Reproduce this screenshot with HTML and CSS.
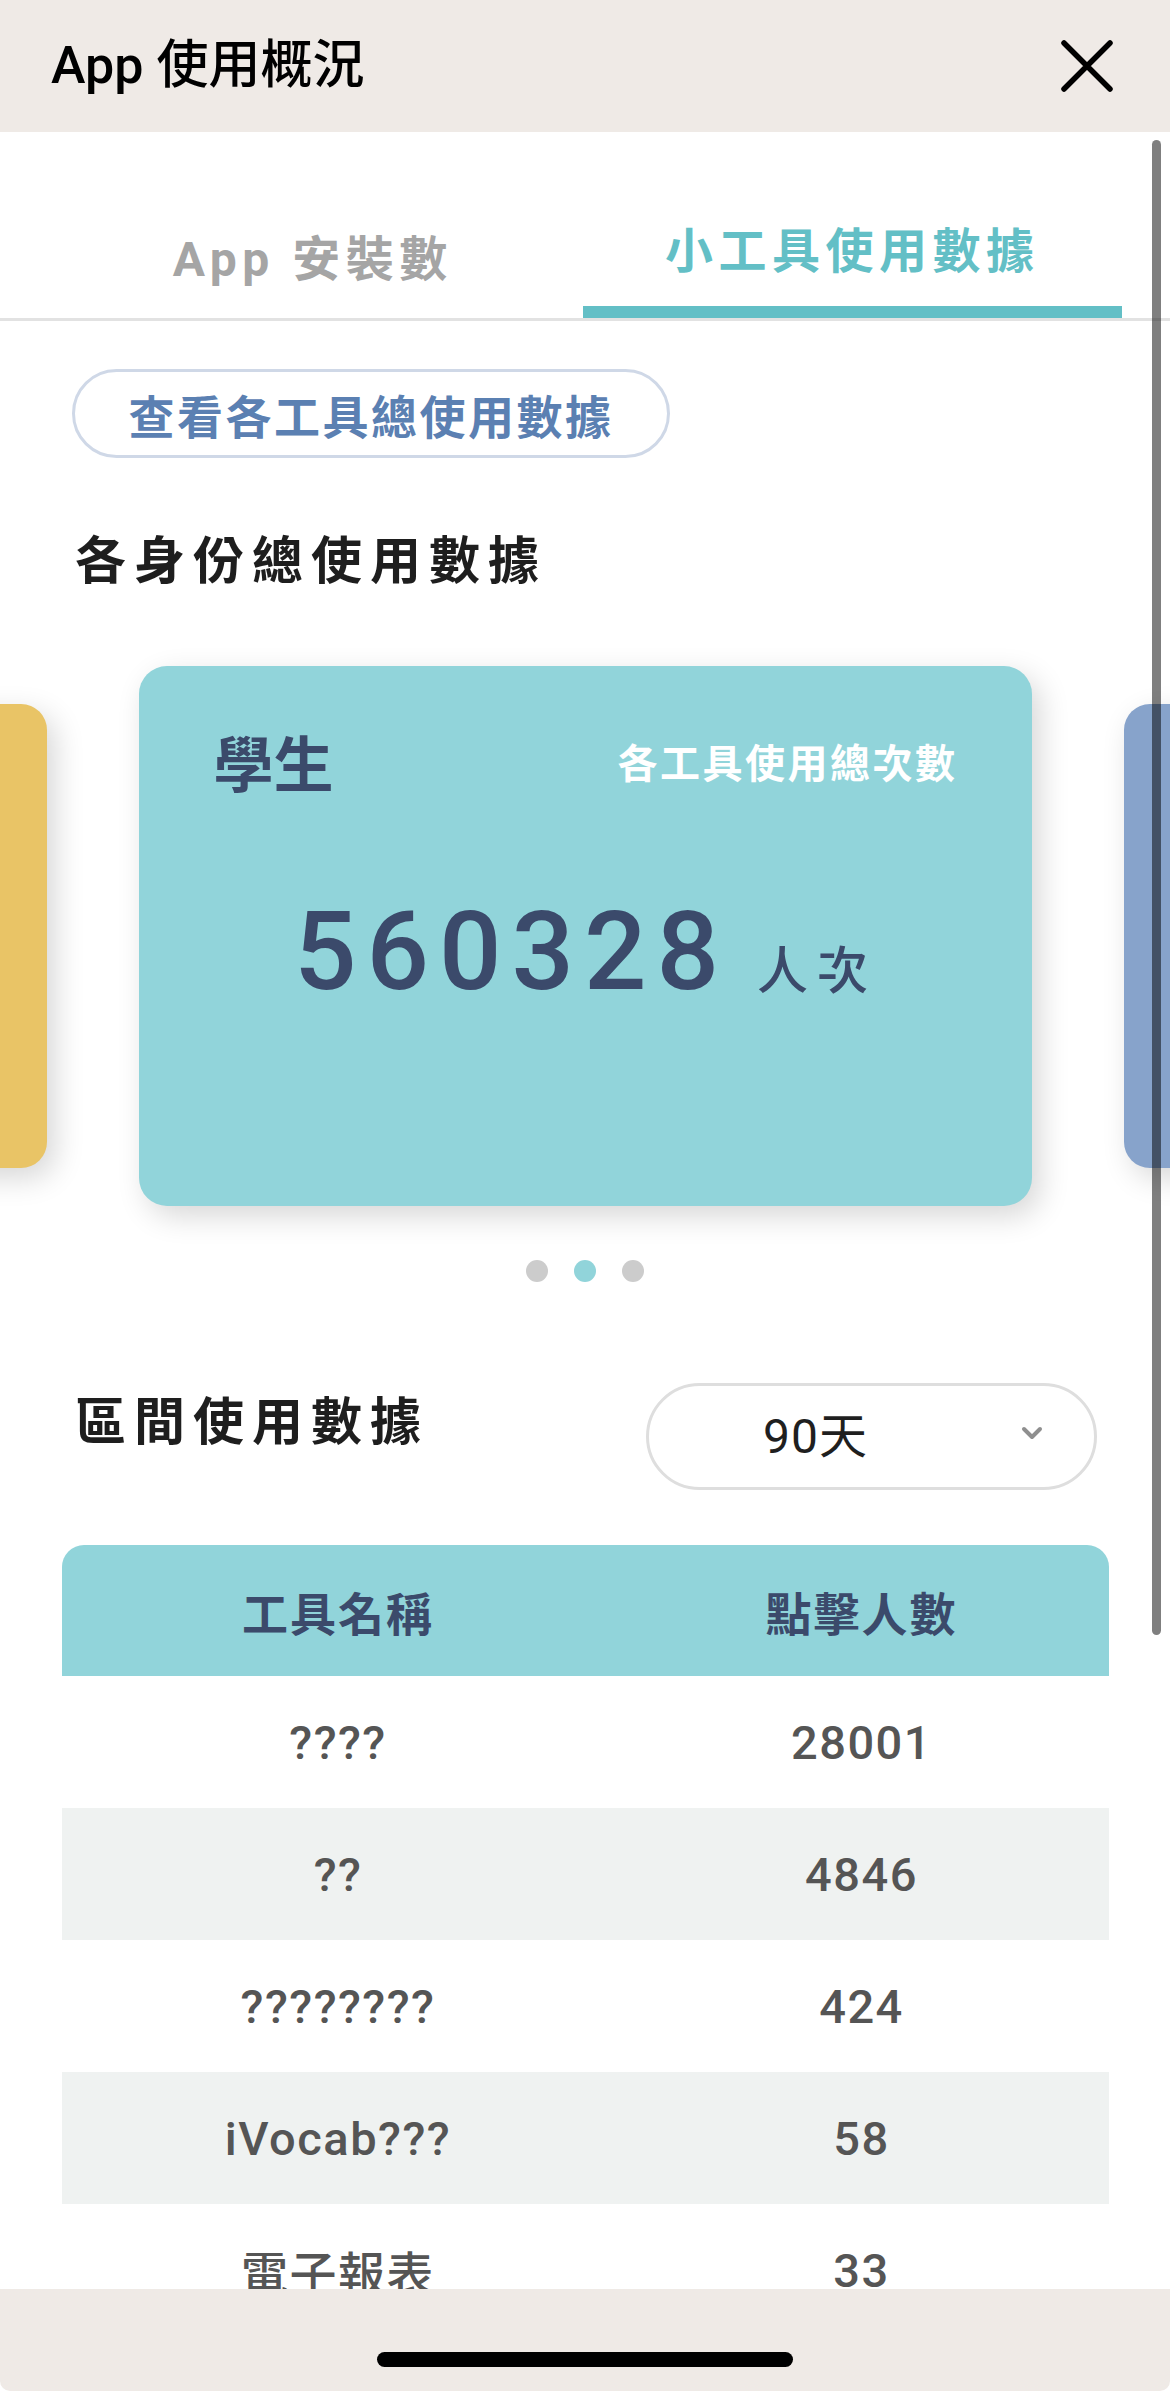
FILE: index.html
```html
<!DOCTYPE html>
<html lang="zh-Hant">
<head>
<meta charset="utf-8">
<title>App 使用概況</title>
<link rel="stylesheet" href="styles.css">
</head>
<body>
<header class="topbar">
  <h1 class="topbar-title">App 使用概況</h1>
  <button class="close-btn" aria-label="關閉">
    <svg width="52" height="52" viewBox="0 0 52 52"><path d="M3 3 L49 49 M49 3 L3 49" stroke="#000" stroke-width="5.5" stroke-linecap="round" fill="none"/></svg>
  </button>
</header>

<main class="content">
  <nav class="tabs">
    <div class="tab"><span class="tab-label">App 安裝數</span></div>
    <div class="tab tab-active"><span class="tab-label">小工具使用數據</span><span class="tab-bar"></span></div>
  </nav>

  <button class="pill-btn">查看各工具總使用數據</button>

  <h2 class="section-title first">各身份總使用數據</h2>

  <div class="carousel">
    <div class="card card-side card-yellow"></div>
    <div class="card card-main">
      <div class="card-top">
        <span class="card-role">學生</span>
        <span class="card-caption">各工具使用總次數</span>
      </div>
      <div class="card-value">
        <span class="card-number">560328</span>
        <span class="card-unit">人次</span>
      </div>
    </div>
    <div class="card card-side card-blue"></div>
  </div>

  <div class="dots">
    <span class="dot"></span>
    <span class="dot dot-active"></span>
    <span class="dot"></span>
  </div>

  <div class="range-row">
    <h2 class="section-title">區間使用數據</h2>
    <div class="select">
      <span class="select-value">90天</span>
      <svg class="chevron" width="22" height="15" viewBox="0 0 22 15"><path d="M3 3 L11 11 L19 3" stroke="#8f8f8f" stroke-width="4" stroke-linecap="round" stroke-linejoin="round" fill="none"/></svg>
    </div>
  </div>

  <div class="table">
    <div class="table-row table-head">
      <span>工具名稱</span><span>點擊人數</span>
    </div>
    <div class="table-row"><span>????</span><span>28001</span></div>
    <div class="table-row alt"><span>??</span><span>4846</span></div>
    <div class="table-row"><span>????????</span><span>424</span></div>
    <div class="table-row alt"><span>iVocab???</span><span>58</span></div>
    <div class="table-row"><span>電子報表</span><span>33</span></div>
  </div>

  <div class="scrollbar"></div>
</main>

<footer class="bottombar">
  <span class="home-indicator"></span>
</footer>
</body>
</html>
```
FILE: styles.css
```css
* { box-sizing: border-box; margin: 0; padding: 0; }

html, body {
  width: 1170px;
  height: 2391px;
  background: #fff;
}

body {
  font-family: "Noto Sans CJK TC", "Roboto", sans-serif;
  display: flex;
  flex-direction: column;
  overflow: hidden;
}

/* Top bar */
.topbar {
  flex: none;
  height: 132px;
  background: #efeae6;
  display: flex;
  align-items: center;
  justify-content: space-between;
  padding: 0 57px 0 51px;
}

.topbar-title {
  font-family: "Roboto", "Noto Sans CJK TC", sans-serif;
  font-size: 52px;
  font-weight: 500;
  color: #000;
  line-height: 60px;
}

.close-btn {
  border: 0;
  background: none;
  width: 52px;
  height: 52px;
  display: block;
}
.close-btn svg { display: block; }

/* Content */
.content {
  flex: 1;
  min-height: 0;
  position: relative;
  overflow: hidden;
  display: flex;
  flex-direction: column;
}

.content > * { flex-shrink: 0; }

/* Tabs */
.tabs {
  display: flex;
  padding: 0 48px 0 43px;
  border-bottom: 3px solid #e2e2e2;
}

.tab {
  flex: 1;
  height: 186px;
  display: flex;
  flex-direction: column;
  justify-content: flex-end;
  align-items: stretch;
  text-align: center;
}

.tab-label {
  font-family: "Roboto", "Noto Sans CJK TC", sans-serif;
  font-size: 48px;
  font-weight: 700;
  letter-spacing: 5.5px;
  line-height: 60px;
  color: #a5a5a5;
  margin-bottom: 28px;
}

.tab-active .tab-label {
  color: #63bfc6;
  margin-bottom: 24px;
}

.tab-bar {
  display: block;
  height: 12px;
  background: #63bfc6;
}

/* Pill button */
.pill-btn {
  align-self: flex-start;
  margin: 48px 0 0 72px;
  width: 598px;
  height: 89px;
  border: 3px solid #cfd8e7;
  border-radius: 45px;
  background: #fff;
  font-family: "Noto Sans CJK TC", sans-serif;
  font-size: 46px;
  font-weight: 700;
  letter-spacing: 2.5px;
  color: #5b80b2;
  line-height: 1;
  display: flex;
  align-items: center;
  justify-content: center;
}

/* Section titles */
.section-title {
  font-family: "Noto Sans CJK TC", sans-serif;
  font-size: 51px;
  font-weight: 700;
  letter-spacing: 8px;
  line-height: 60px;
  color: #1e1e1e;
}

.section-title.first {
  margin: 69px 0 0 75px;
}

/* Carousel */
.carousel {
  display: flex;
  justify-content: center;
  align-items: center;
  gap: 92px;
  overflow: hidden;
  padding: 79px 0 40px;
}

.card {
  flex: none;
  border-radius: 28px;
  box-shadow: 8px 10px 30px rgba(0, 0, 0, 0.16);
}

.card-side {
  width: 768px;
  height: 464px;
  border-radius: 26px;
}

.card-yellow { background: #e9c466; }
.card-blue { background: #87a3cb; }

.card-main {
  width: 893px;
  height: 540px;
  background: #91d4da;
  padding: 60px 74px 0 75px;
  display: flex;
  flex-direction: column;
}

.card-top {
  display: flex;
  justify-content: space-between;
  align-items: center;
}

.card-role {
  font-size: 60px;
  font-weight: 700;
  line-height: 70px;
  color: #3b4a6b;
}

.card-caption {
  font-size: 40px;
  font-weight: 700;
  letter-spacing: 2.5px;
  line-height: 50px;
  color: #fff;
}

.card-value {
  margin-top: 101px;
  display: flex;
  justify-content: center;
  align-items: baseline;
}

.card-number {
  font-family: "Roboto", "Noto Sans CJK TC", sans-serif;
  font-size: 110px;
  font-weight: 500;
  letter-spacing: 10px;
  line-height: 110px;
  color: #3b4a6b;
}

.card-unit {
  margin-left: 28px;
  font-size: 51px;
  font-weight: 500;
  letter-spacing: 9px;
  color: #3b4a6b;
}

/* Dots */
.dots {
  display: flex;
  justify-content: center;
  gap: 26px;
  margin-top: 14px;
}

.dot {
  width: 22px;
  height: 22px;
  border-radius: 50%;
  background: #cccccc;
}

.dot-active { background: #91d4da; }

/* Range row */
.range-row {
  display: flex;
  justify-content: space-between;
  align-items: flex-start;
  margin-top: 101px;
  padding: 0 73px 0 75px;
}

.range-row .section-title {
  margin-top: 5px;
}

.select {
  flex: none;
  width: 451px;
  height: 107px;
  border: 3px solid #dedede;
  border-radius: 54px;
  display: flex;
  align-items: center;
  justify-content: space-between;
  padding: 0 51px 0 114px;
}

.select-value {
  font-family: "Roboto", "Noto Sans CJK TC", sans-serif;
  font-size: 48px;
  font-weight: 400;
  letter-spacing: 1px;
  color: #1f1f1f;
  line-height: 60px;
}

.chevron { display: block; margin-top: -6px; }

/* Table */
.table {
  margin: 55px 61px 0 62px;
}

.table-row {
  display: grid;
  grid-template-columns: 552px 1fr;
  height: 132px;
  align-items: center;
  text-align: center;
  font-family: "Roboto", "Noto Sans CJK TC", sans-serif;
  font-size: 47px;
  font-weight: 500;
  letter-spacing: 1.5px;
  color: #555555;
  background: #fff;
}

.table-row.alt { background: #eff2f1; }

.table-head {
  height: 131px;
  background: #91d4da;
  border-radius: 22px 22px 0 0;
  font-family: "Noto Sans CJK TC", sans-serif;
  font-size: 46px;
  font-weight: 700;
  letter-spacing: 2px;
  color: #3b4a6b;
}

/* Scrollbar overlay */
.scrollbar {
  position: absolute;
  top: 8px;
  right: 9px;
  width: 9px;
  height: 1495px;
  border-radius: 5px;
  background: rgba(0, 0, 0, 0.5);
}

/* Bottom bar */
.bottombar {
  flex: none;
  height: 102px;
  background: #efeae6;
  border-radius: 0 0 10px 10px;
  display: flex;
  justify-content: center;
  padding-top: 63px;
}

.home-indicator {
  display: block;
  width: 416px;
  height: 15px;
  border-radius: 8px;
  background: #000;
}
```
